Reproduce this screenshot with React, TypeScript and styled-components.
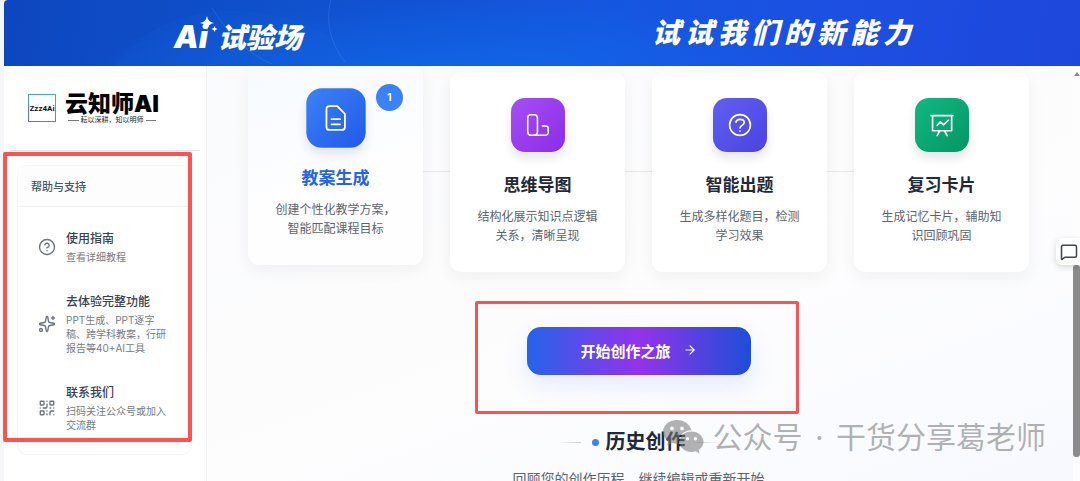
import React from 'react';
import styled, { createGlobalStyle } from 'styled-components';
import { ArrowRight, CircleHelp, MessageSquare, QrCode, Sparkles } from 'lucide-react';

const GlobalStyle = createGlobalStyle`
  * { box-sizing: border-box; }
  body {
    margin: 0;
    background: #f5f6f7;
    font-family: Inter, "Noto Sans CJK SC", sans-serif;
    color: #1f2937;
  }
  h1, h2, h3, p { margin: 0; }
`;

const Shell = styled.div`
  position: relative;
  display: flex;
  flex-direction: column;
  height: 100vh;
  padding-left: 4px;
  overflow: hidden;
`;

const Banner = styled.header`
  position: relative;
  flex: none;
  display: flex;
  align-items: center;
  justify-content: space-between;
  height: 66px;
  padding: 0 164px 0 170px;
  border-top-left-radius: 4px;
  overflow: hidden;
  color: #fff;
  background:
    radial-gradient(ellipse 380px 70px at 42% 110%, rgba(16, 112, 240, 0.6), transparent),
    linear-gradient(100deg, #0d47bf 0%, #0f50cc 25%, #1557e0 55%, #1d4ee2 80%, #1d47da 100%);
`;

const BannerArt = styled.svg`
  position: absolute;
  top: 0;
  left: 0;
`;

const Brand = styled.div`
  position: relative;
  display: flex;
  align-items: baseline;
  gap: 10px;
  margin-top: 8px;
  font-style: italic;
  font-weight: 900;
  line-height: 40px;
`;

const BrandLatin = styled.span`
  font-size: 31px;
`;

const BrandCjk = styled.span`
  font-size: 28px;
`;

const BrandStar = styled.svg`
  position: absolute;
  top: -1px;
  left: 26px;
`;

const Slogan = styled.p`
  position: relative;
  font-size: 28px;
  font-style: italic;
  font-weight: 900;
  line-height: 40px;
  letter-spacing: 5px;
`;

const Body = styled.div`
  flex: 1;
  display: flex;
  min-height: 0;
`;

const Sidebar = styled.aside`
  flex: none;
  width: 203px;
  background: #fff;
  border-right: 1px solid #f1f2f4;
`;

const Company = styled.div`
  display: flex;
  align-items: center;
  gap: 9px;
  height: 85px;
  margin: 0 6px;
  padding-left: 18px;
  border-bottom: 1px solid #e5e5e5;
`;

const CompanyMark = styled.div`
  display: flex;
  align-items: center;
  justify-content: center;
  width: 28px;
  height: 28px;
  border: 1px solid;
  border-image: linear-gradient(30deg, #5b6be0, #3fc0a0) 1;
  background: #fff;
  color: #111;
  font-family: Roboto, sans-serif;
  font-size: 8px;
  font-weight: 700;
`;

const CompanyName = styled.div`
  color: #000;
  font-size: 23px;
  font-weight: 900;
  line-height: 24px;
`;

const CompanyMotto = styled.div`
  display: flex;
  align-items: center;
  gap: 2px;
  margin: 0 3px;
  color: #222;
  font-size: 7px;
  line-height: 8px;

  &::before,
  &::after {
    content: '';
    flex: 1;
    height: 1px;
    background: #777;
  }
`;

const HelpPanel = styled.section`
  position: relative;
  margin: 14px 14px 0 13px;
  padding-bottom: 22px;
  border: 1px solid #f6f6f7;
  border-radius: 10px;
`;

const HelpHeading = styled.h2`
  padding: 11px 13px 9px;
  border-bottom: 1px solid #f1f2f4;
  background: #fdfdfd;
  color: #4b5563;
  font-size: 11px;
  font-weight: 500;
  line-height: 20px;
`;

const HelpList = styled.nav`
  display: flex;
  flex-direction: column;
  gap: 28px;
  padding: 22px 22px 0 20px;
`;

const HelpLink = styled.a`
  display: flex;
  align-items: center;
  gap: 10px;
  color: #6b7280;
  text-decoration: none;

  svg { flex: none; }
`;

const HelpTitle = styled.div`
  margin-bottom: 1px;
  color: #374151;
  font-size: 12px;
  font-weight: 500;
  line-height: 20px;
`;

const HelpText = styled.div`
  color: #757b86;
  font-size: 10px;
  line-height: 14px;
`;

const Highlight = styled.div<{ $inset: string; $width: number }>`
  position: absolute;
  inset: ${(p) => p.$inset};
  border: ${(p) => p.$width}px solid #fb5252;
  border-radius: 2px;
  pointer-events: none;
`;

const Main = styled.main`
  flex: 1;
  display: flex;
  flex-direction: column;
  align-items: center;
  min-width: 0;
  padding: 6px 44px 0 41px;
  overflow: hidden;
  background: linear-gradient(160deg, #f9fbfe 0%, #fcfcfd 35%, #fdfdfe 60%, #f7f9fe 100%);
`;

const Steps = styled.div`
  position: relative;
  display: grid;
  grid-template-columns: repeat(4, 1fr);
  gap: 27px;
  width: 100%;

  &::before {
    content: '';
    position: absolute;
    top: 99px;
    left: 80px;
    right: 80px;
    height: 1px;
    background: #e5e7ea;
  }
`;

const StepCard = styled.article<{ $active?: boolean }>`
  position: relative;
  display: flex;
  flex-direction: column;
  align-items: center;
  padding: 26px 27px 27px;
  border-radius: 11px;
  background: ${(p) => (p.$active ? 'linear-gradient(160deg, #f6faff, #fefeff 60%)' : '#fff')};
  box-shadow: 0 5px 16px rgba(30, 41, 59, 0.06);
  text-align: center;
  transform: ${(p) => (p.$active ? 'translateY(-7px)' : 'none')};
`;

const StepIcon = styled.div<{ $from: string; $to: string; $active?: boolean }>`
  display: flex;
  align-items: center;
  justify-content: center;
  width: 54px;
  height: 54px;
  border-radius: 14px;
  background: linear-gradient(135deg, ${(p) => p.$from}, ${(p) => p.$to});
  box-shadow: 0 6px 10px rgba(30, 41, 59, 0.12);
  transform: ${(p) => (p.$active ? 'scale(1.1)' : 'none')};
`;

const StepTitle = styled.h3<{ $active?: boolean }>`
  margin-top: 21px;
  color: ${(p) => (p.$active ? '#2563eb' : '#1f2937')};
  font-size: 17px;
  font-weight: 700;
  line-height: 24px;
`;

const StepText = styled.p`
  margin-top: 10px;
  color: #5b6472;
  font-size: 12px;
  line-height: 19px;
`;

const StepBadge = styled.span`
  position: absolute;
  top: 19px;
  right: 20px;
  width: 27px;
  height: 27px;
  border-radius: 50%;
  background: #3b82f6;
  color: #fff;
  font-size: 10px;
  font-weight: 700;
  line-height: 27px;
`;

const StartArea = styled.div`
  position: relative;
  margin-top: 55px;
`;

const StartButton = styled.button`
  display: flex;
  align-items: center;
  justify-content: center;
  gap: 12px;
  width: 224px;
  height: 48px;
  padding: 0 0 2px;
  border: 0;
  border-radius: 14px;
  background: linear-gradient(90deg, #2563eb, #9333ea 50%, #1d4ed8);
  box-shadow: 0 10px 24px rgba(59, 100, 246, 0.12);
  color: #fff;
  font: inherit;
  font-size: 15px;
  font-weight: 700;
`;

const HistoryHeading = styled.h2`
  display: flex;
  align-items: center;
  gap: 7px;
  margin-top: 52px;
  font-size: 20px;
  font-weight: 700;
  line-height: 30px;
`;

const Rule = styled.span<{ $flip?: boolean }>`
  width: 22px;
  height: 1px;
  margin: 0 4px;
  background: linear-gradient(${(p) => (p.$flip ? '270deg' : '90deg')}, transparent, #c9ccd2);
`;

const Dot = styled.span`
  width: 7px;
  height: 7px;
  border-radius: 50%;
  background: #3b82f6;
`;

const HistoryText = styled.p`
  margin-top: 12px;
  color: #5b6472;
  font-size: 14px;
  line-height: 20px;
  white-space: nowrap;
`;

const ScrollTrack = styled.div`
  flex: none;
  display: flex;
  flex-direction: column;
  align-items: center;
  width: 7px;
  padding-top: 6px;
  background: #fdfdfd;
`;

const ScrollArrow = styled.div`
  border: 3px solid transparent;
  border-top: 0;
  border-bottom: 4px solid #8a8a8a;
`;

const ScrollThumb = styled.div`
  width: 7px;
  height: 192px;
  margin-top: 189px;
  border-radius: 3px;
  background: #8b8b8b;
`;

const ChatButton = styled.button`
  position: absolute;
  top: 238px;
  right: 0;
  display: flex;
  align-items: center;
  width: 24px;
  height: 27px;
  padding: 0 0 0 4px;
  border: 0;
  border-radius: 6px 0 0 6px;
  background: #fff;
  box-shadow: 0 2px 6px rgba(0, 0, 0, 0.16);
  color: #3f4650;
`;

const Watermark = styled.div`
  position: absolute;
  right: 34px;
  bottom: 22px;
  display: flex;
  align-items: center;
  gap: 8px;
  color: rgba(120, 120, 120, 0.56);
  font-size: 30px;
  font-weight: 400;
  line-height: 44px;
  pointer-events: none;
`;

const WatermarkDot = styled.span`
  margin: 0 4px;
`;

const strokeProps = {
  width: 26,
  height: 26,
  viewBox: '0 0 24 24',
  fill: 'none',
  stroke: '#fff',
  strokeWidth: 1.5,
  strokeLinecap: 'round' as const,
  strokeLinejoin: 'round' as const,
};

const DocumentIcon = () => (
  <svg {...strokeProps}>
    <path d="M6.500 2H13l6.500 6.500V19.500A2.500 2.500 0 0 1 17 22H6.500A2.500 2.500 0 0 1 4 19.500V4.500A2.500 2.500 0 0 1 6.500 2zM8.200 13h7.200M8.200 17.300h7.200" />
  </svg>
);

const MapIcon = () => (
  <svg {...strokeProps} strokeWidth={1.4}>
    <rect x="2.500" y="2.500" width="9" height="19" rx="3" />
    <path d="M8 21.500h11a2.500 2.500 0 0 0 2.500-2.500v-3.500a2.500 2.500 0 0 0-2.500-2.500h-3" />
  </svg>
);

const QuestionIcon = () => (
  <svg {...strokeProps}>
    <circle cx="12" cy="12" r="9.600" />
    <path d="M8.200 9.500c.4-1.800 2-2.700 3.800-2.700 2.200 0 3.900 1.200 3.900 3 0 2.600-3.900 2.400-3.900 4.900M12 17.700v.1" />
  </svg>
);

const BoardIcon = () => (
  <svg {...strokeProps}>
    <path d="M1.800 3.300h20.400M3.300 3.300v14h17.600v-14M7.500 12.300l3-3.200 3 2.700 4.300-4.200M10 17.300L7.500 21.800M14.200 17.300L16.800 21.800" />
  </svg>
);

const WeChatIcon = () => (
  <svg width="42" height="36" viewBox="0 0 42 36" fill="currentColor">
    <path
      fillRule="evenodd"
      d="M15 1C7 1 1 6.200 1 13c0 3.800 2 7 5.200 9.200L5 26.500l4.900-2.500c1.900.6 4 .9 6.300.8-.9-7.300 5-13.300 13.300-13.500C28 5.300 22.200 1 15 1zM10 7.500a1.900 1.900 0 1 1 0 3.800 1.900 1.900 0 0 1 0-3.800zm10 0a1.900 1.900 0 1 1 0 3.800 1.900 1.900 0 0 1 0-3.800z"
    />
    <path
      fillRule="evenodd"
      d="M29.500 12.500c-6.600 0-12 4.500-12 10.200s5.400 10.200 12 10.200c1.500 0 2.900-.2 4.200-.6l4 2.200-1-3.600c2.900-1.900 4.800-4.800 4.800-8.200 0-5.700-5.400-10.200-12-10.200zM25.500 18a1.700 1.700 0 1 1 0 3.400 1.700 1.700 0 0 1 0-3.400zm8 0a1.700 1.700 0 1 1 0 3.400 1.700 1.700 0 0 1 0-3.400z"
    />
  </svg>
);

const steps = [
  { title: '教案生成', text: '创建个性化教学方案，智能匹配课程目标', from: '#3b82f6', to: '#2159e8', Icon: DocumentIcon, active: true },
  { title: '思维导图', text: '结构化展示知识点逻辑关系，清晰呈现', from: '#a64ff5', to: '#8b2ce6', Icon: MapIcon },
  { title: '智能出题', text: '生成多样化题目，检测学习效果', from: '#6060f1', to: '#4b43e0', Icon: QuestionIcon },
  { title: '复习卡片', text: '生成记忆卡片，辅助知识回顾巩固', from: '#10b981', to: '#069565', Icon: BoardIcon },
];

const helpItems = [
  { title: '使用指南', text: '查看详细教程', Icon: CircleHelp },
  { title: '去体验完整功能', text: 'PPT生成、PPT逐字稿、跨学科教案，行研报告等40+AI工具', Icon: Sparkles },
  { title: '联系我们', text: '扫码关注公众号或加入交流群', Icon: QrCode },
];

export default function App() {
  return (
    <Shell>
      <GlobalStyle />
      <Banner>
        <BannerArt width="1076" height="66" viewBox="0 0 1076 66" fill="none">
          <path d="M110 66C140 25 190 5 250 12s90 30 110 54z" fill="#1a6ae8" opacity="0.12" />
          <path d="M327 0c-6 22 0 44 14 62M208 8c14 22 32 44 60 56" stroke="#5c9bff" opacity="0.25" />
        </BannerArt>
        <Brand>
          <BrandLatin>Ai</BrandLatin>
          <BrandCjk>试验场</BrandCjk>
          <BrandStar width="18" height="18" viewBox="0 0 18 18" fill="#fff">
            <path d="M7 0q1 6 7 7-6 1-7 7-1-6-7-7 6-1 7-7zM14.500 10q.4 2.600 3 3-2.600.4-3 3-.4-2.600-3-3 2.600-.4 3-3z" />
          </BrandStar>
        </Brand>
        <Slogan>试试我们的新能力</Slogan>
      </Banner>
      <Body>
        <Sidebar>
          <Company>
            <CompanyMark>Zzz4Ai</CompanyMark>
            <div>
              <CompanyName>云知师AI</CompanyName>
              <CompanyMotto>耘以深耕，知以明师</CompanyMotto>
            </div>
          </Company>
          <HelpPanel>
            <HelpHeading>帮助与支持</HelpHeading>
            <HelpList>
              {helpItems.map(({ title, text, Icon }) => (
                <HelpLink key={title} href="#">
                  <Icon size={18} strokeWidth={1.8} />
                  <div>
                    <HelpTitle>{title}</HelpTitle>
                    <HelpText>{text}</HelpText>
                  </div>
                </HelpLink>
              ))}
            </HelpList>
            <Highlight $inset="-14px -1px 12px -15px" $width={4} />
          </HelpPanel>
        </Sidebar>
        <Main>
          <Steps>
            {steps.map(({ title, text, from, to, Icon, active }) => (
              <StepCard key={title} $active={active}>
                <StepIcon $from={from} $to={to} $active={active}>
                  <Icon />
                </StepIcon>
                <StepTitle $active={active}>{title}</StepTitle>
                <StepText>{text}</StepText>
                {active && <StepBadge>1</StepBadge>}
              </StepCard>
            ))}
          </Steps>
          <StartArea>
            <StartButton type="button">
              开始创作之旅
              <ArrowRight size={14} strokeWidth={2} />
            </StartButton>
            <Highlight $inset="-26px -48px -39px -52px" $width={3} />
          </StartArea>
          <HistoryHeading>
            <Rule />
            <Dot />
            历史创作
            <Rule $flip />
          </HistoryHeading>
          <HistoryText>回顾您的创作历程，继续编辑或重新开始</HistoryText>
        </Main>
        <ScrollTrack>
          <ScrollArrow />
          <ScrollThumb />
        </ScrollTrack>
      </Body>
      <ChatButton type="button" aria-label="反馈">
        <MessageSquare size={18} strokeWidth={2} />
      </ChatButton>
      <Watermark>
        <WeChatIcon />
        <span>
          公众号
          <WatermarkDot> · </WatermarkDot>
          干货分享葛老师
        </span>
      </Watermark>
    </Shell>
  );
}
